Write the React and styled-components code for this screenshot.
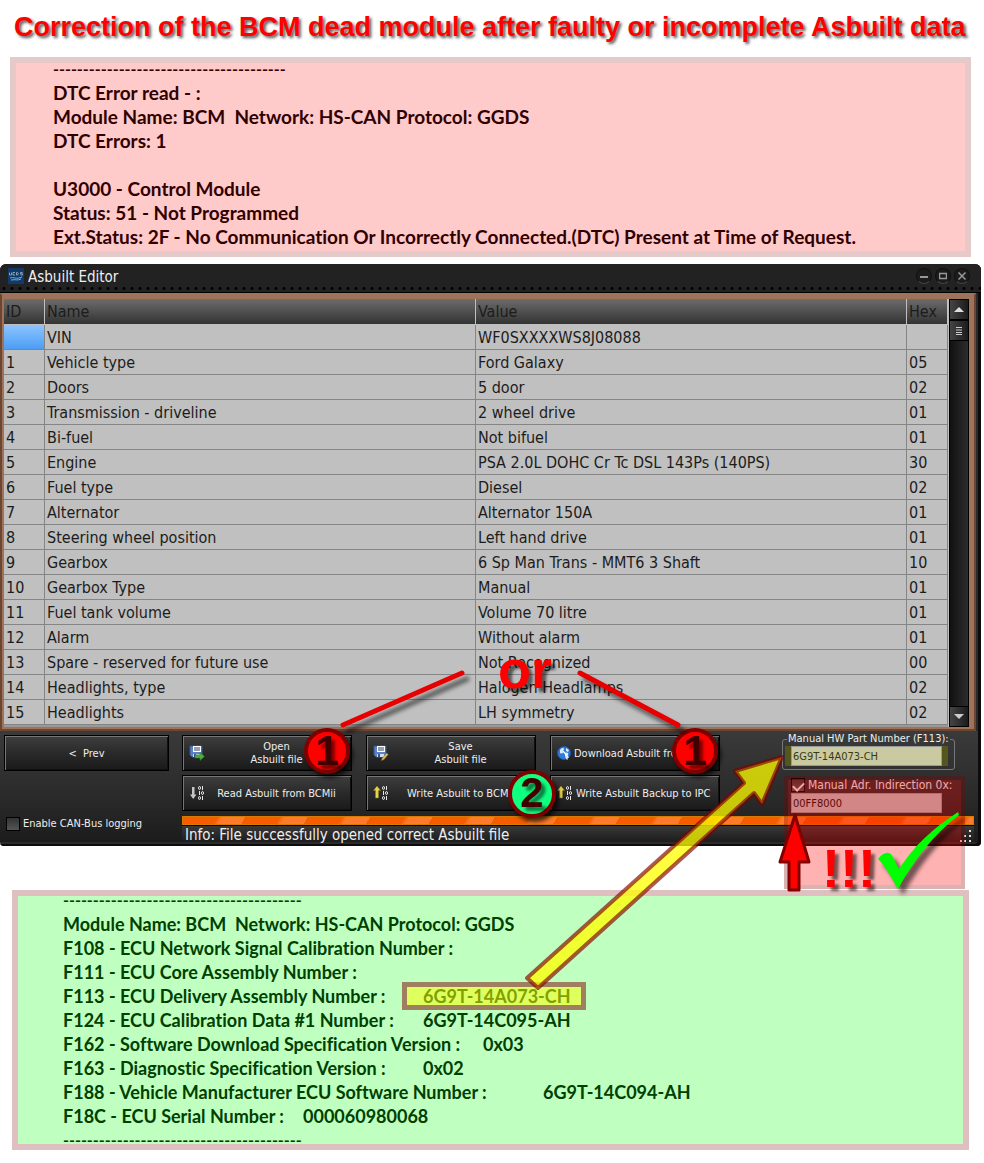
import React from 'react'
import styled, { createGlobalStyle } from 'styled-components'

const TAHOMA = "'DejaVu Sans Condensed', 'Noto Sans', sans-serif"
const CALIBRI = "'Lato', sans-serif"
const ARIAL = "'Liberation Sans', sans-serif"

const ROWS = [
  ['', 'VIN', 'WF0SXXXXWS8J08088', ''],
  ['1', 'Vehicle type', 'Ford Galaxy', '05'],
  ['2', 'Doors', '5 door', '02'],
  ['3', 'Transmission - driveline', '2 wheel drive', '01'],
  ['4', 'Bi-fuel', 'Not bifuel', '01'],
  ['5', 'Engine', 'PSA 2.0L DOHC Cr Tc DSL 143Ps (140PS)', '30'],
  ['6', 'Fuel type', 'Diesel', '02'],
  ['7', 'Alternator', 'Alternator 150A', '01'],
  ['8', 'Steering wheel position', 'Left hand drive', '01'],
  ['9', 'Gearbox', '6 Sp Man Trans - MMT6 3 Shaft', '10'],
  ['10', 'Gearbox Type', 'Manual', '01'],
  ['11', 'Fuel tank volume', 'Volume 70 litre', '01'],
  ['12', 'Alarm', 'Without alarm', '01'],
  ['13', 'Spare - reserved for future use', 'Not Recognized', '00'],
  ['14', 'Headlights, type', 'Halogen Headlamps', '02'],
  ['15', 'Headlights', 'LH symmetry', '02']
]

const DTC_LOG = [
  'DTC Error read - :',
  'Module Name: BCM  Network: HS-CAN Protocol: GGDS',
  'DTC Errors: 1',
  '',
  'U3000 - Control Module',
  'Status: 51 - Not Programmed',
  'Ext.Status: 2F - No Communication Or Incorrectly Connected.(DTC) Present at Time of Request.'
].join('\n')

const AppIcon = () => (
  <svg width='16' height='16' viewBox='0 0 16 16' aria-hidden='true'>
    <rect width='16' height='16' fill='#123a66' />
    <path d='M1.500 4.500v2.500h2V4.500M7 4.500H5v2.500h2M8.500 4.500v2.500h1l1-1.200-1-1.300zM14.500 4.500h-2v1.200h2V7h-2' fill='none' stroke='#9fb6cc' strokeWidth='.8' />
    <path d='M2 10c4-1.500 6 2 12-1M3 12c5-1 6 1 10-1' fill='none' stroke='#6fb0e0' />
  </svg>
)

const DiskShape = () => (
  <g>
    <path d='M1 1h12v11H3l-2-2z' fill='#5b82c4' stroke='#35558f' />
    <path d='M4 1h8v6H4z' fill='#fff' />
    <path d='M5 3h6M5 5h6' stroke='#2c3e66' />
    <path d='M4 9h7v3H4z' fill='#d5def0' />
    <path d='M5 9h2v3H5z' fill='#35558f' />
  </g>
)

const OpenIcon = () => (
  <svg width='16' height='16' viewBox='0 0 16 16' aria-hidden='true'>
    <DiskShape />
    <path d='M6 10h5V7.500l4.500 4-4.500 4V13H6z' fill='#4fae3d' stroke='#2c7a24' strokeWidth='.6' />
  </svg>
)

const SaveIcon = () => (
  <svg width='16' height='16' viewBox='0 0 16 16' aria-hidden='true'>
    <DiskShape />
    <path d='M9 13.500 13.500 8l1.800 1.500-4.500 5.300L8.500 15.500z' fill='#e0b45c' stroke='#8a6526' strokeWidth='.5' />
  </svg>
)

const GlobeIcon = () => (
  <svg width='14' height='16' viewBox='0 0 14 16' aria-hidden='true'>
    <circle cx='7' cy='8' r='6.500' fill='#2f7bd8' stroke='#1c55a8' />
    <path d='M3 5c2-3 4-2 4-1S5 6 6 7 4 9 3 8zM8 8c2-1 4 0 3 2s-3 2-3 1zM9 3l3 2-1 2-2-1z' fill='#d6ebff' />
    <path d='m6 6 5 6-2 .3 1.500 2.200' fill='none' stroke='#fff' strokeWidth='1.200' />
  </svg>
)

const BitsIcon = ({ up }) => (
  <svg width='16' height='16' viewBox='0 0 16 16' aria-hidden='true'>
    {up
      ? <path d='M4 1l3.500 4.500h-2V13h-3V5.500h-2z' fill='#e6d44c' stroke='#8a7a1e' strokeWidth='.5' />
      : <path d='M3 2h2.500v7.500h2L4.200 14 1 9.500h2z' fill='#c6c6c6' />}
    <g fill='none' stroke='#e6e6e6'>
      <ellipse cx='10.500' cy='3' rx='1' ry='1.500' />
      <path d='M13.500 1v4M10.500 6v4M13.500 11v4' />
      <ellipse cx='13.500' cy='8' rx='1' ry='1.500' />
      <ellipse cx='10.500' cy='13' rx='1' ry='1.500' />
    </g>
  </svg>
)

const ACTIONS = [
  { lines: ['Open', 'Asbuilt file'], icon: <OpenIcon />, badge: '1' },
  { lines: ['Save', 'Asbuilt file'], icon: <SaveIcon /> },
  { lines: ['Download Asbuilt from'], icon: <GlobeIcon />, badge: '1', left: true },
  { lines: ['Read Asbuilt from BCMii'], icon: <BitsIcon /> },
  { lines: ['Write Asbuilt to BCMii'], icon: <BitsIcon up />, badge: '2' },
  { lines: ['Write Asbuilt Backup to IPC'], icon: <BitsIcon up />, left: true }
]

export default function App () {
  return (
    <Page>
      <GlobalStyle />
      <Title>Correction of the BCM dead module after faulty or incomplete Asbuilt data</Title>

      <ErrorPanel>
        <Log $size={19}>
          <Dashes>{'-'.repeat(39)}</Dashes>
          {DTC_LOG}
        </Log>
      </ErrorPanel>

      <Window>
        <TitleBar>
          <AppIcon />
          <WindowName>Asbuilt Editor</WindowName>
          <WindowButton aria-label='Minimize'>
            <svg width='8' height='8'><path d='M0 5h8' stroke='#999' strokeWidth='2' /></svg>
          </WindowButton>
          <WindowButton aria-label='Maximize'>
            <svg width='8' height='8'><path d='M.5 1.500h7v5h-7z' fill='none' stroke='#999' strokeWidth='1.500' /></svg>
          </WindowButton>
          <WindowButton aria-label='Close'>
            <svg width='8' height='8'><path d='M.5.5l7 7M7.500.5l-7 7' stroke='#999' strokeWidth='1.500' /></svg>
          </WindowButton>
        </TitleBar>

        <GridFrame>
          <Table>
            <colgroup>
              <col width='41' />
              <col />
              <col />
              <col width='41' />
            </colgroup>
            <thead>
              <tr>
                <th>ID</th>
                <th>Name</th>
                <th>Value</th>
                <th>Hex</th>
              </tr>
            </thead>
            <tbody>
              {ROWS.map(([id, name, value, hex]) => (
                <tr key={name}>
                  <Cell $selected={!id}>{id}</Cell>
                  <Cell>{name}</Cell>
                  <Cell>{value}</Cell>
                  <Cell>{hex}</Cell>
                </tr>
              ))}
            </tbody>
          </Table>
          <Scrollbar>
            <ScrollButton aria-label='Scroll up'>
              <svg width='10' height='6'><path d='M0 5l5-5 5 5z' fill='#ddd' /></svg>
            </ScrollButton>
            <ScrollButton aria-label='Scroll position'>
              <svg width='6' height='8'><path d='M0 .5h6M0 3h6M0 5.500h6M0 7.500h6' stroke='#ccc' /></svg>
            </ScrollButton>
            <Track />
            <ScrollButton aria-label='Scroll down'>
              <svg width='10' height='6'><path d='M0 0h10L5 5z' fill='#ccc' /></svg>
            </ScrollButton>
          </Scrollbar>
        </GridFrame>

        <Controls>
          <Side>
            <Button>&lt;&nbsp; Prev</Button>
            <Check>
              <input type='checkbox' />
              Enable CAN-Bus logging
            </Check>
          </Side>
          <Main>
            <TopRow>
              <Actions>
                {ACTIONS.map(({ lines, icon, badge, left }) => (
                  <Button key={lines.join(' ')}>
                    {icon}
                    <Caption $left={left}>
                      {lines.map(line => <span key={line}>{line}</span>)}
                    </Caption>
                    {badge && <Badge $green={badge === '2'}>{badge}</Badge>}
                  </Button>
                ))}
              </Actions>
              <Manual>
                <PartNumber>
                  <legend><label htmlFor='hw-part'>Manual HW Part Number (F113):</label></legend>
                  <Field id='hw-part' defaultValue='6G9T-14A073-CH' />
                </PartNumber>
                <Indirection>
                  <Check $large>
                    <input type='checkbox' defaultChecked />
                    Manual Adr. Indirection 0x:
                  </Check>
                  <Field aria-label='Manual Adr. Indirection' defaultValue='00FF8000' $plain />
                </Indirection>
              </Manual>
            </TopRow>
            <Progress role='progressbar' aria-label='Progress' />
            <Info>
              Info: File successfully opened correct Asbuilt file
              <svg width='14' height='12' viewBox='0 0 14 12' fill='#ddd' aria-hidden='true'>
                <path d='M9 0h2v2H9zM9 5h2v2H9zM9 10h2v2H9zM4 5h2v2H4zM4 10h2v2H4zM0 10h2v2H0z' />
              </svg>
            </Info>
          </Main>
        </Controls>
      </Window>

      <ModulePanel>
        <Log $size={18}>
          <Dashes>{'-'.repeat(40)}</Dashes>
          {'Module Name: BCM  Network: HS-CAN Protocol: GGDS\n'}
          {'F108 - ECU Network Signal Calibration Number :\n'}
          {'F111 - ECU Core Assembly Number :\n'}
          {'F113 - ECU Delivery Assembly Number :\t'}<Marked>6G9T-14A073-CH</Marked>{'\n'}
          {'F124 - ECU Calibration Data #1 Number :\t6G9T-14C095-AH\n'}
          {'F162 - Software Download Specification Version :\t0x03\n'}
          {'F163 - Diagnostic Specification Version :\t0x02\n'}
          {'F188 - Vehicle Manufacturer ECU Software Number :\t6G9T-14C094-AH\n'}
          {'F18C - ECU Serial Number :\t000060980068'}
          <Dashes>{'-'.repeat(40)}</Dashes>
        </Log>
      </ModulePanel>

      <Shade />
      <Shout $left={498} $top={639}>or</Shout>
      <Shout $left={822} $top={838}>!!!</Shout>
      <Drawing viewBox='0 0 984 1163' aria-hidden='true'>
        <g className='lifted' stroke='#e80000' strokeWidth='5' strokeLinecap='round'>
          <path d='M343 725 462 673' />
          <path d='M580 673 678 725' />
        </g>
        <path
          d='M527 978 744 783 735 771 782 757 762 804 754 793 538 988z'
          fill='rgba(255,255,0,.75)'
          stroke='rgba(128,0,0,.65)'
          strokeWidth='4'
          strokeLinejoin='round'
        />
        <path d='M795 815 809 862H799V890H789V862H780z' fill='#f00' stroke='#800000' strokeWidth='3' strokeLinejoin='round' />
        <path
          className='lifted'
          d='M878 859C884 851 890 851 893 857L899 869C914 846 932 829 958 812L959 815C934 834 914 860 898 889C892 879 887 868 878 859z'
          fill='#0f0'
        />
      </Drawing>
    </Page>
  )
}

const GlobalStyle = createGlobalStyle`
  * {
    box-sizing: border-box;
  }
  body {
    margin: 0;
    background: #fff;
  }
  button, input {
    margin: 0;
    font: inherit;
  }
`

const Page = styled.main`
  position: relative;
  padding-bottom: 13px;
`

const Title = styled.h1`
  margin: 0;
  height: 57px;
  padding: 0 14px;
  font: bold 27px/54px ${ARIAL};
  color: #f00;
  text-shadow: 2px 2px 3px rgba(0, 0, 0, .65);
  white-space: nowrap;
`

const ErrorPanel = styled.section`
  margin: 0 13px 7px 10px;
  padding: 0 43px 8px;
  background: #ffcaca;
  box-shadow: inset 0 0 0 6px #e6caca;
  color: #300000;
`

const ModulePanel = styled.section`
  display: flex;
  align-items: center;
  height: 260px;
  margin: 44px 15px 0 12px;
  padding: 0 51px;
  background: #bfffbf;
  box-shadow: inset 0 0 0 6px #dfbfbf;
  color: #004000;
`

const Log = styled.pre`
  margin: 0;
  font: bold ${p => p.$size}px/24px ${CALIBRI};
  font-variant-ligatures: none;
  tab-size: 60px;
`

const Dashes = styled.span`
  display: block;
  font-size: 16px;
`

const Marked = styled.mark`
  position: relative;
  background: none;
  color: inherit;
  &::after {
    content: '';
    position: absolute;
    inset: -3px -15px -3px -21px;
    border: 5px solid rgba(128, 0, 0, .5);
    background: rgba(255, 255, 0, .5) padding-box;
  }
`

const Window = styled.section`
  margin-right: 3px;
  padding-bottom: 4px;
  border-radius: 6px 6px 4px 4px;
  background: #2b2b2b;
  box-shadow: inset -3px -2px 0 #0c0c0c;
  font-family: ${TAHOMA};
  color: #eee;
`

const TitleBar = styled.header`
  display: flex;
  align-items: center;
  gap: 3px;
  height: 29px;
  padding: 0 11px 4px 8px;
  border-radius: 6px 6px 0 0;
  background:
    radial-gradient(circle, #000 1px, transparent 2px) 0 22px / 8px 5px repeat-x,
    #222;
  border-bottom: 1px solid #000;
`

const WindowName = styled.span`
  flex: 1;
  padding: 2px 0 0 1px;
  font-size: 15px;
`

const WindowButton = styled.button`
  display: flex;
  align-items: center;
  justify-content: center;
  width: 16px;
  height: 16px;
  padding: 0;
  border: 1px solid #111;
  border-bottom-color: #444;
  border-radius: 50%;
  background: #1c1c1c;
`

const GridFrame = styled.div`
  display: flex;
  height: 438px;
  margin: 0 5px 0 0;
  padding: 4px 5px 2px 2px;
  border: 2px solid #6b4632;
  border-top-color: #9a7560;
  background: #a0725a;
`

const Table = styled.table`
  flex: 1;
  align-self: flex-start;
  width: 100%;
  table-layout: fixed;
  border-collapse: separate;
  border-spacing: 0;
  border-bottom: 2px solid #999;
  background: #c0c0c0;
  font-size: 16px;
  line-height: 23px;
  color: #1c1c1c;
  th {
    height: 26px;
    padding: 0 2px;
    border-right: 1px solid #c0c0c0;
    border-bottom: 1px solid #c0c0c0;
    background: linear-gradient(#6c6c6c, #333) padding-box;
    font-weight: normal;
    text-align: left;
  }
`

const Cell = styled.td`
  height: 25px;
  padding: 1px 2px 0;
  border: 1px solid #858585;
  border-width: 0 1px 1px 0;
  background: ${p => p.$selected ? 'linear-gradient(#8cc4ff, #4d9df5)' : 'none'};
  white-space: nowrap;
`

const Scrollbar = styled.div`
  display: flex;
  flex: 0 0 21px;
  flex-direction: column;
  padding-left: 1px;
  background: #c0c0c0;
`

const ScrollButton = styled.button`
  display: flex;
  align-items: center;
  justify-content: center;
  height: 21px;
  padding: 0;
  border: 1px solid #000;
  background: linear-gradient(90deg, #444, #1c1c1c);
`

const Track = styled.div`
  flex: 1;
  border: solid #000;
  border-width: 0 1px;
  background: linear-gradient(90deg, #111, #2c2c2c);
`

const Controls = styled.div`
  display: flex;
  gap: 13px;
  margin-right: 3px;
  padding: 4px 4px 0;
  background: linear-gradient(#3a3a3a, #2a2a2a 60%, #1c1c1c);
  font-size: 11px;
  line-height: 13px;
`

const Side = styled.div`
  display: flex;
  flex-direction: column;
  justify-content: space-between;
  width: 165px;
  padding-bottom: 10px;
`

const Main = styled.div`
  flex: 1;
`

const Button = styled.button`
  position: relative;
  display: flex;
  align-items: center;
  justify-content: center;
  height: 36px;
  padding: 0 6px;
  border: 1px solid #000;
  background: linear-gradient(#3e3e3e, #2a2a2a 50%, #1a1a1a);
  box-shadow: inset 1px 1px 0 #777, inset -1px -1px 0 #111;
  color: #eee;
`

const Caption = styled.span`
  display: flex;
  flex: 1;
  flex-direction: column;
  align-items: ${p => p.$left ? 'flex-start' : 'center'};
  padding-left: 3px;
  white-space: nowrap;
`

const Badge = styled.strong`
  position: absolute;
  z-index: 1;
  top: ${p => p.$green ? -6 : -8}px;
  right: ${p => p.$green ? -21 : 1}px;
  width: ${p => p.$green ? 48 : 46}px;
  height: ${p => p.$green ? 48 : 46}px;
  border: 4px solid #800000;
  border-radius: 50%;
  background: ${p => p.$green ? '#0fff80' : '#f00'};
  box-shadow: 3px 4px 4px rgba(0, 0, 0, .7);
  font: bold 42px/38px ${ARIAL};
  color: #400000;
  text-shadow: 4px 4px 3px rgba(0, 0, 0, .5);
`

const TopRow = styled.div`
  display: flex;
  justify-content: space-between;
`

const Actions = styled.div`
  display: grid;
  grid-template-columns: repeat(3, 170px);
  gap: 4px 14px;
  align-content: start;
`

const Manual = styled.div`
  width: 173px;
  height: 84px;
  margin: -3px 19px 0 0;
`

const PartNumber = styled.fieldset`
  min-width: 0;
  height: 38px;
  margin: 0;
  padding: 0 2px 0 8px;
  border: 1px solid #777;
  border-radius: 3px;
  legend {
    height: 14px;
    margin-left: -4px;
    padding: 0 1px;
    white-space: nowrap;
  }
`

const Indirection = styled.div`
  padding: 7px 9px 0;
`

const Field = styled.input`
  display: block;
  width: 151px;
  height: 20px;
  padding: 0 1px;
  border: 1px solid #999;
  background: ${p => p.$plain ? '#c0c0c0' : '#cacaa2'};
  box-shadow: ${p => p.$plain ? 'none' : '-6px 0 0 #55551e, 6px 0 0 #55551e'};
  color: ${p => p.$plain ? '#111' : '#3a3a10'};
`

const Check = styled.label`
  display: flex;
  align-items: center;
  gap: 3px;
  padding-left: ${p => p.$large ? 0 : 2}px;
  font-size: ${p => p.$large ? 12 : 11}px;
  line-height: 16px;
  white-space: nowrap;
  input {
    display: grid;
    flex: none;
    place-items: center;
    width: 14px;
    height: 14px;
    appearance: none;
    border: 1px solid #000;
    background: linear-gradient(#333, #555);
  }
  input:checked::after {
    content: '';
    width: 5px;
    height: 9px;
    border: solid #eee;
    border-width: 0 2px 2px 0;
    transform: rotate(45deg);
  }
`

const Progress = styled.div`
  height: 9px;
  border: 1px solid #d87a00;
  background: repeating-linear-gradient(120deg, #f85c00 0 30px, #ff7a2c 34px 54px);
`

const Info = styled.div`
  display: flex;
  align-items: center;
  justify-content: space-between;
  height: 17px;
  padding: 3px 0 0 3px;
  border-top: 1px solid #000;
  background: linear-gradient(#383838, #1c1c1c);
  font-size: 15px;
  line-height: 17px;
  white-space: nowrap;
`

const Shade = styled.div`
  position: absolute;
  top: 776px;
  left: 784px;
  width: 181px;
  height: 113px;
  border: 4px solid rgba(128, 0, 0, .3);
  background: rgba(255, 0, 0, .3) padding-box;
  pointer-events: none;
`

const Shout = styled.strong`
  position: absolute;
  z-index: 1;
  top: ${p => p.$top}px;
  left: ${p => p.$left}px;
  font: bold 54px/60px ${ARIAL};
  color: #f00;
  text-shadow: 4px 4px 3px rgba(0, 0, 0, .55);
`

const Drawing = styled.svg`
  position: absolute;
  z-index: 1;
  top: 0;
  left: 0;
  width: 984px;
  height: 1163px;
  fill: none;
  pointer-events: none;
  .lifted {
    filter: drop-shadow(5px 6px 2px rgba(0, 0, 0, .55));
  }
`
